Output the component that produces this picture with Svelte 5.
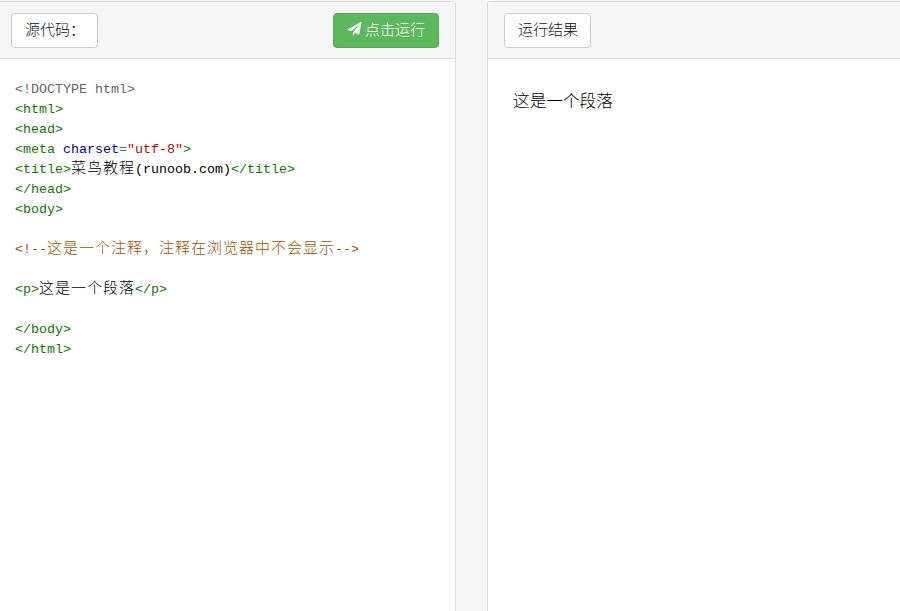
<script>
	const comment = '这是一个注释，注释在浏览器中不会显示';
</script>

<div class="page">
	<section class="panel">
		<header>
			<button class="btn">源代码：</button>
			<button class="btn run">
				<svg viewBox="0 0 16 16" width="15" height="15" aria-hidden="true">
					<path d="M15.6.4 12.9 14.6 8.6 12.7 6.3 15.6V12.4L13.2 3.4 4.6 11 .4 9.2Z" fill="#fff" />
				</svg>
				点击运行
			</button>
		</header>
		<pre class="code"><span class="plain">&lt;!DOCTYPE html&gt;</span>
<span class="tag">&lt;html&gt;</span>
<span class="tag">&lt;head&gt;</span>
<span class="tag">&lt;meta</span> <span class="attr">charset</span><span class="plain">=</span><span class="str">"utf-8"</span><span class="tag">&gt;</span>
<span class="tag">&lt;title&gt;</span><span class="cn">菜鸟教程</span>(runoob.com)<span class="tag">&lt;/title&gt;</span>
<span class="tag">&lt;/head&gt;</span>
<span class="tag">&lt;body&gt;</span>

<span class="comment">&lt;!--<span class="cn">{comment}</span>--&gt;</span>

<span class="tag">&lt;p&gt;</span><span class="cn">这是一个段落</span><span class="tag">&lt;/p&gt;</span>

<span class="tag">&lt;/body&gt;</span>
<span class="tag">&lt;/html&gt;</span></pre>
	</section>
	<section class="panel result">
		<header>
			<button class="btn">运行结果</button>
		</header>
		<p>这是一个段落</p>
	</section>
</div>

<style>
	:global(body) {
		background-color: #f5f5f5;
	}

	.page {
		display: flex;
		justify-content: space-between;
		height: 611px;
		padding-top: 1px;
		box-sizing: border-box;
		overflow: hidden;
		font-family: "Noto Sans CJK SC", sans-serif;
		font-weight: 300;
	}

	.panel {
		width: 456px;
		background-color: #fff;
		border: 1px solid #ddd;
		border-left: none;
		border-bottom: none;
		border-radius: 0 4px 0 0;
		box-sizing: border-box;
	}

	.result {
		flex: 0 0 413px;
		border-left: 1px solid #ddd;
		border-right: none;
		border-radius: 4px 0 0 0;
	}

	header {
		display: flex;
		justify-content: space-between;
		align-items: center;
		height: 57px;
		box-sizing: border-box;
		padding: 0 16px 0 11px;
		background-color: #f5f5f5;
		border-bottom: 1px solid #ddd;
	}

	.result header {
		padding-left: 16px;
	}

	.btn {
		display: flex;
		align-items: center;
		height: 35px;
		padding: 0 12px 4px 13px;
		font-family: inherit;
		font-weight: inherit;
		font-size: 15px;
		color: #111;
		background-color: #fff;
		border: 1px solid #ccc;
		border-radius: 4px;
	}

	.run {
		gap: 3px;
		padding-right: 13px;
		color: #fff;
		background-color: #5cb85c;
		border-color: #4cae4c;
	}

	.code {
		margin: 0;
		padding: 21px 15px 0;
		font-family: "Liberation Mono", monospace;
		font-size: 13.33px;
		line-height: 20px;
		color: #000;
	}

	.cn {
		font-family: "Noto Sans CJK SC", sans-serif;
		font-size: 15px;
		line-height: 0;
		letter-spacing: 1px;
	}

	.plain {
		color: #666;
	}

	.tag {
		color: #170;
	}

	.attr {
		color: #009;
	}

	.str {
		color: #a11;
	}

	.comment {
		color: #950;
	}

	p {
		margin: 30px 0 0 25px;
		font-size: 16.67px;
		line-height: 22px;
		color: #000;
	}
</style>
